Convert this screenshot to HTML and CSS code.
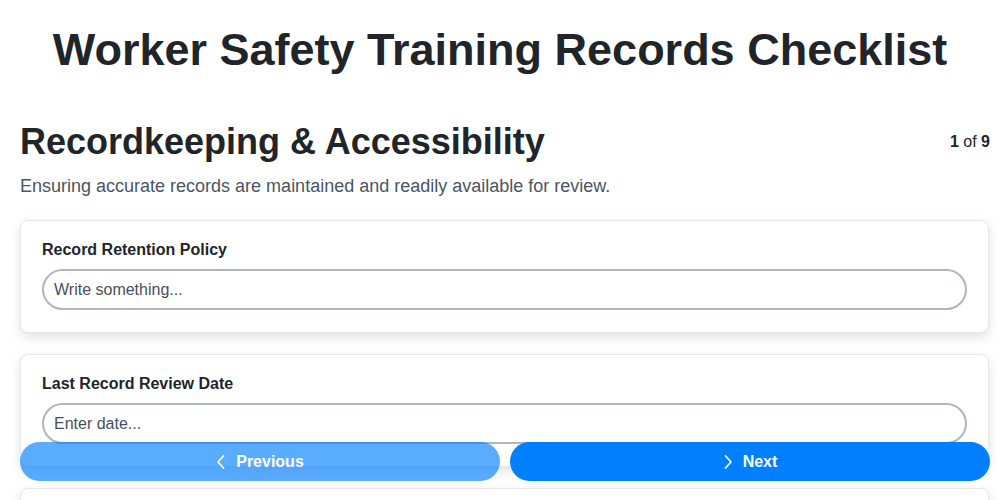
FILE: index.html
```html
<!DOCTYPE html>
<html lang="en">
<head>
<meta charset="utf-8">
<title>Worker Safety Training Records Checklist</title>
<link rel="stylesheet" href="styles.css">
</head>
<body>
<h1 class="title">Worker Safety Training Records Checklist</h1>
<main class="page">
  <div class="section-head">
    <h2 class="section-title">Recordkeeping &amp; Accessibility</h2>
    <div class="counter"><b>1</b> of <b>9</b></div>
  </div>
  <p class="section-desc">Ensuring accurate records are maintained and readily available for review.</p>
  <div class="cards">
    <div class="card">
      <label class="field-label">Record Retention Policy</label>
      <input class="field-input" type="text" placeholder="Write something...">
    </div>
    <div class="card">
      <label class="field-label">Last Record Review Date</label>
      <input class="field-input" type="text" placeholder="Enter date...">
    </div>
    <div class="card">
      <label class="field-label">Digital Records Backup</label>
      <input class="field-input" type="text" placeholder="Write something...">
    </div>
  </div>
</main>
<nav class="nav">
  <button class="btn btn-prev" disabled>
    <svg class="chev" width="10" height="16" viewBox="0 0 10 16"><path d="M7.5 2 L2 8 L7.5 14" fill="none" stroke="currentColor" stroke-width="1.8" stroke-linecap="round" stroke-linejoin="round"/></svg>
    Previous
  </button>
  <button class="btn btn-next">
    <svg class="chev" width="10" height="16" viewBox="0 0 10 16"><path d="M2.5 2 L8 8 L2.5 14" fill="none" stroke="currentColor" stroke-width="1.8" stroke-linecap="round" stroke-linejoin="round"/></svg>
    Next
  </button>
</nav>
</body>
</html>
```
FILE: styles.css
```css
* { box-sizing: border-box; }
html, body { margin: 0; padding: 0; background: #fff; }
body {
  font-family: "Liberation Sans", Arial, sans-serif;
  color: #212529;
}
.title {
  margin: 0;
  padding: 25px 0 0;
  font-size: 45px;
  line-height: 50px;
  font-weight: 700;
  text-align: center;
  color: #212529;
}
.page { padding: 45px 10px 0 20px; }
.section-head {
  display: flex;
  align-items: center;
  justify-content: space-between;
}
.section-title {
  margin: 0;
  font-size: 36px;
  line-height: 44px;
  font-weight: 700;
}
.counter { font-size: 16px; color: #212529; }
.section-desc {
  margin: 10px 0 0;
  font-size: 18px;
  line-height: 24px;
  color: #4b5563;
}
.cards {
  margin-top: 22px;
  display: flex;
  flex-direction: column;
  gap: 21px;
  padding-right: 1px;
}
.card {
  background: #fff;
  border: 1px solid #e6e6ec;
  border-radius: 8px;
  padding: 19px 21px 22px;
  box-shadow: 0 4px 12px rgba(0, 0, 0, 0.12);
  display: flex;
  flex-direction: column;
}
.field-label {
  font-size: 16px;
  line-height: 20px;
  font-weight: 700;
  color: #212529;
  margin-bottom: 9px;
}
.field-input {
  font-family: inherit;
  font-size: 16px;
  height: 41px;
  border: 2px solid #adb5bd;
  border-radius: 21px;
  padding: 0 10px;
  color: #212529;
  background: #fff;
  outline: none;
}
.field-input::placeholder { color: #495057; opacity: 1; }
.nav {
  position: fixed;
  left: 20px;
  right: 10px;
  bottom: 19px;
  display: flex;
  gap: 10px;
}
.btn {
  flex: 1;
  height: 39px;
  border: none;
  border-radius: 20px;
  background: #0080ff;
  color: #fff;
  font-family: inherit;
  font-size: 16px;
  font-weight: 700;
  display: flex;
  align-items: center;
  justify-content: center;
  gap: 10px;
}
.btn-prev { opacity: 0.65; }
.chev { display: block; }
```
